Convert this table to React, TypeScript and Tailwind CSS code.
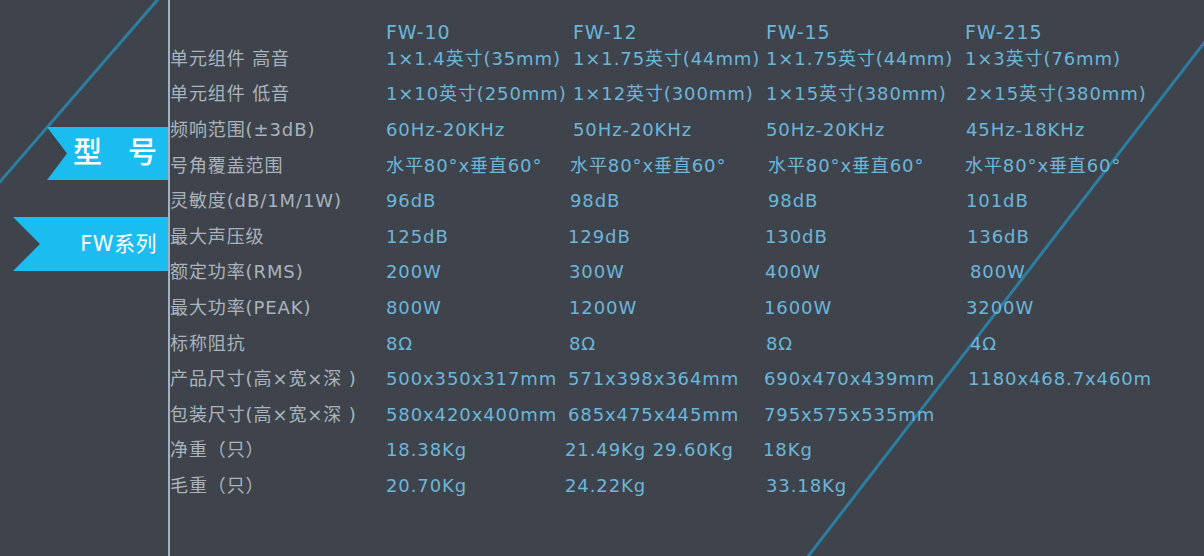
import React from "react";

type Cell = { t: string; c?: string };

const header: Cell[] = [
  { t: "FW-10", c: "" },
  { t: "FW-12", c: "pl-[8px]" },
  { t: "FW-15", c: "pl-[4px]" },
  { t: "FW-215", c: "pl-[1px]" },
];

const rows: { label: string; cells: Cell[] }[] = [
  {
    label: "单元组件 高音",
    cells: [
      { t: "1×1.4英寸(35mm)" },
      { t: "1×1.75英寸(44mm)", c: "pl-[8px]" },
      { t: "1×1.75英寸(44mm)", c: "pl-[4px]" },
      { t: "1×3英寸(76mm)", c: "pl-[1px]" },
    ],
  },
  {
    label: "单元组件 低音",
    cells: [
      { t: "1×10英寸(250mm)" },
      { t: "1×12英寸(300mm)", c: "pl-[8px]" },
      { t: "1×15英寸(380mm)", c: "pl-[4px]" },
      { t: "2×15英寸(380mm)", c: "pl-[2px]" },
    ],
  },
  {
    label: "频响范围(±3dB)",
    cells: [
      { t: "60Hz-20KHz" },
      { t: "50Hz-20KHz", c: "pl-[8px]" },
      { t: "50Hz-20KHz", c: "pl-[4px]" },
      { t: "45Hz-18KHz", c: "pl-[2px]" },
    ],
  },
  {
    label: "号角覆盖范围",
    cells: [
      { t: "水平80°x垂直60°" },
      { t: "水平80°x垂直60°", c: "pl-[5px]" },
      { t: "水平80°x垂直60°", c: "pl-[6px]" },
      { t: "水平80°x垂直60°", c: "pl-[1px]" },
    ],
  },
  {
    label: "灵敏度(dB/1M/1W)",
    cells: [
      { t: "96dB" },
      { t: "98dB", c: "pl-[5px]" },
      { t: "98dB", c: "pl-[6px]" },
      { t: "101dB", c: "pl-[2px]" },
    ],
  },
  {
    label: "最大声压级",
    cells: [
      { t: "125dB" },
      { t: "129dB", c: "pl-[3px]" },
      { t: "130dB", c: "pl-[3px]" },
      { t: "136dB", c: "pl-[3px]" },
    ],
  },
  {
    label: "额定功率(RMS)",
    cells: [
      { t: "200W" },
      { t: "300W", c: "pl-[4px]" },
      { t: "400W", c: "pl-[3px]" },
      { t: "800W", c: "pl-[6px]" },
    ],
  },
  {
    label: "最大功率(PEAK)",
    cells: [
      { t: "800W" },
      { t: "1200W", c: "pl-[4px]" },
      { t: "1600W", c: "pl-[2px]" },
      { t: "3200W", c: "pl-[2px]" },
    ],
  },
  {
    label: "标称阻抗",
    cells: [
      { t: "8Ω" },
      { t: "8Ω", c: "pl-[4px]" },
      { t: "8Ω", c: "pl-[4px]" },
      { t: "4Ω", c: "pl-[6px]" },
    ],
  },
  {
    label: "产品尺寸(高×宽×深 )",
    cells: [
      { t: "500x350x317mm" },
      { t: "571x398x364mm", c: "pl-[3px]" },
      { t: "690x470x439mm", c: "pl-[2px]" },
      { t: "1180x468.7x460m", c: "pl-[4px]" },
    ],
  },
  {
    label: "包装尺寸(高×宽×深 )",
    cells: [
      { t: "580x420x400mm" },
      { t: "685x475x445mm", c: "pl-[3px]" },
      { t: "795x575x535mm", c: "pl-[2px]" },
      { t: "" },
    ],
  },
  {
    label: "净重（只）",
    cells: [
      { t: "18.38Kg" },
      { t: "21.49Kg 29.60Kg" },
      { t: "18Kg", c: "pl-[1px]" },
      { t: "" },
    ],
  },
  {
    label: "毛重（只）",
    cells: [
      { t: "20.70Kg" },
      { t: "24.22Kg" },
      { t: "33.18Kg", c: "pl-[4px]" },
      { t: "" },
    ],
  },
];

const colW = ["w-[179px]", "w-[197px]", "w-[202px]", "w-[220px]"];

export default function App() {
  return (
    <div className="relative flex w-[1204px] h-[556px] overflow-hidden bg-[#3f444c] font-['DejaVu_Sans','Noto_Sans_CJK_SC',sans-serif]">
      <svg
        className="absolute inset-0 pointer-events-none"
        width="1204"
        height="556"
        viewBox="0 0 1204 556"
      >
        <line x1="160" y1="-3" x2="-2" y2="184" stroke="#2c7fa2" strokeWidth="3" />
        <line x1="1207" y1="39" x2="806" y2="559" stroke="#2c7fa2" strokeWidth="3" />
      </svg>

      {/* left banners */}
      <div className="relative flex w-[168px] shrink-0 flex-col">
        <div className="mt-[127px] ml-[47px] flex h-[53px] w-[121px] items-center justify-end gap-[26px] bg-[#1bbdf0] pr-[11px] text-[29px] font-medium leading-none text-white [clip-path:polygon(0_0,100%_0,100%_100%,0_100%,20px_50%)]">
          <span>型</span>
          <span>号</span>
        </div>
        <div className="mt-[37px] ml-[13px] flex h-[54px] w-[155px] items-center justify-end bg-[#1bbdf0] pr-[11px] text-[21px] leading-none tracking-[0.5px] text-white [clip-path:polygon(0_0,100%_0,100%_100%,0_100%,27px_50%)]">
          FW系列
        </div>
      </div>

      {/* vertical divider */}
      <div className="relative h-full w-[2px] shrink-0 bg-[#a3b1c0]" />

      {/* table */}
      <div className="relative flex flex-1 flex-col pt-[22px] text-[18px] tracking-[0.9px] whitespace-nowrap">
        <div className="flex h-[19px] items-center leading-[18px] text-[19px] text-[#6cb6da]">
          <div className="w-[216px] shrink-0" />
          {header.map((h, i) => (
            <div key={i} className={`${colW[i]} shrink-0 ${h.c ?? ""}`}>
              {h.t}
            </div>
          ))}
        </div>
        {rows.map((r, ri) => (
          <div key={ri} className="flex h-[35.6px] items-center leading-[20px]">
            <div className="w-[216px] shrink-0 text-[#aab3bc]">{r.label}</div>
            {r.cells.map((c, ci) => (
              <div key={ci} className={`${colW[ci]} shrink-0 text-[#6cb6da] ${c.c ?? ""}`}>
                {c.t}
              </div>
            ))}
          </div>
        ))}
      </div>
    </div>
  );
}
